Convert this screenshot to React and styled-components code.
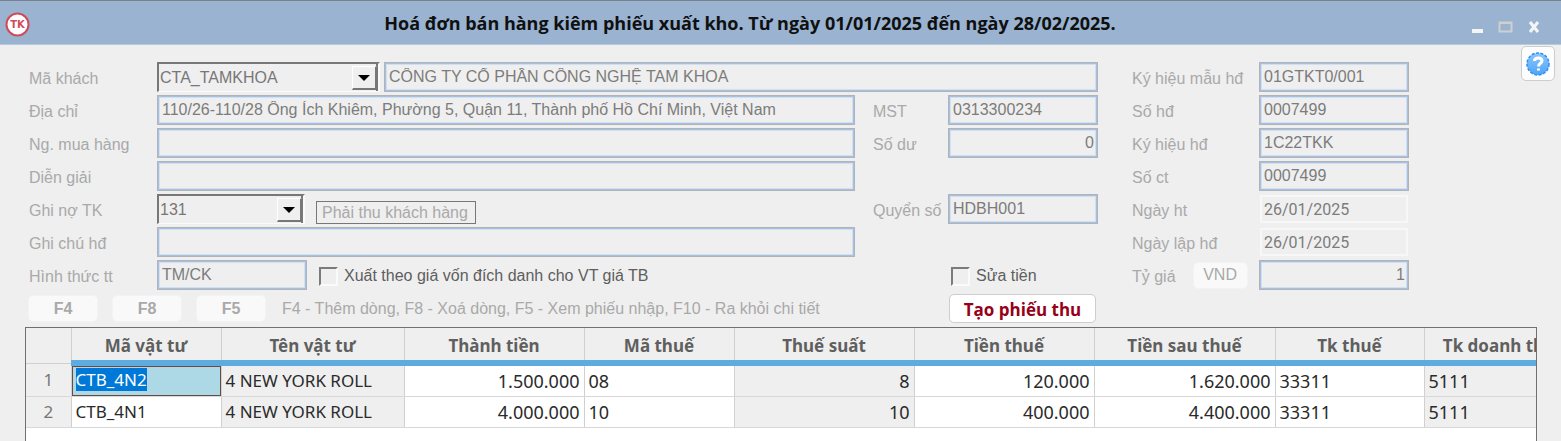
import { useEffect, useRef } from "react"
import styled, { createGlobalStyle } from "styled-components"

const GlobalStyle = createGlobalStyle`
    * {
        box-sizing: border-box;
    }
    body {
        margin: 0;
        background-color: #efefef;
        font-family: "Liberation Sans", sans-serif;
        font-size: 16px;
        line-height: 20px;
    }
    input, select, button {
        font: inherit;
    }
`

const Window = styled.div`
    display: flex;
    flex-direction: column;
    min-height: 100vh;
    overflow: hidden;
`

const TitleBar = styled.header`
    display: grid;
    grid-template-columns: 74px 1fr 120px;
    align-items: center;
    height: 45px;
    padding: 0 20px 0 5px;
    background-color: #99b3d0;
    border-top: 1px solid #7b818a;
    border-bottom: 1px solid #b7c9dd;
`

const Title = styled.h1`
    margin: 0;
    font-family: "Open Sans", sans-serif;
    font-size: 18px;
    font-weight: 700;
    line-height: 24px;
    color: #101010;
    text-align: center;
    white-space: nowrap;
`

const Logo = styled.svg`
    display: block;
    width: 25px;
    height: 25px;
    margin-top: 4px;
`

const WindowButtons = styled.div`
    display: flex;
    justify-content: flex-end;
    gap: 14px;
    margin-top: 8px;
`

const WindowButton = styled.button`
    display: flex;
    padding: 0;
    border: 0;
    background: none;
`

const FormArea = styled.main`
    display: flex;
    align-items: flex-start;
    padding: 1px 6px 0 29px;
`

const LeftPart = styled.div`
    flex: 1;
    min-width: 0;
    padding-top: 16px;
`

const LeftFields = styled.div`
    display: grid;
    grid-template-columns: 128px minmax(0, 1fr) 75px 150px;
    grid-auto-rows: 30px;
    row-gap: 3px;
    align-items: center;
`

const RightFields = styled.div`
    display: grid;
    grid-template-columns: 127px 150px;
    grid-auto-rows: 30px;
    row-gap: 3px;
    align-items: center;
    padding-top: 16px;
    margin: 0 112px 0 34px;
`

const Label = styled.label`
    grid-column: ${(props) => props.$column || "auto"};
    padding-top: 3px;
    color: #a9a9a9;
    white-space: nowrap;
`

const Field = styled.div`
    display: flex;
    align-items: center;
    gap: ${(props) => props.$gap || 4}px;
    grid-column: ${(props) => props.$column || "auto"};
    margin-right: ${(props) => (props.$wide ? 18 : 0)}px;
`

const TextBox = styled.input`
    flex: ${(props) => (props.$width ? "none" : 1)};
    width: ${(props) => (props.$width ? `${props.$width}px` : "100%")};
    min-width: 0;
    height: 30px;
    padding: 0 3px 0 4px;
    border: 1px solid #b0b3ba;
    border-radius: 0;
    box-shadow: inset 0 0 0 1px #a9bfdc, inset 0 0 0 2px #cfe0f2;
    background-color: #efefef;
    color: #7c7c7c;
    text-align: ${(props) => (props.$right ? "right" : "left")};
    outline: none;
`

const DateBox = styled(TextBox)`
    height: 28px;
    margin: 0 1px;
    border: 2px solid #f7f7f7;
    box-shadow: none;
    padding-left: 2px;
    font-family: Roboto, sans-serif;
`

const Combo = styled.div`
    display: grid;
    width: ${(props) => props.$width}px;
    height: 30px;
    border-style: solid;
    border-width: 2px 2px 1px 2px;
    border-color: #777 #fafafa #fafafa #777;
    box-shadow: inset -2px 0 0 #777;
`

const ComboSelect = styled.select`
    grid-area: 1 / 1;
    width: 100%;
    padding: 1px 28px 0 1px;
    border: 0;
    appearance: none;
    background: none;
    color: #777;
    outline: none;
`

const ComboArrow = styled.span`
    grid-area: 1 / 1;
    justify-self: end;
    display: flex;
    align-items: center;
    justify-content: center;
    width: 25px;
    margin: 2px 1px 1px 0;
    border-style: solid;
    border-width: 1px 2px 2px 1px;
    border-color: #fff #777 #777 #fff;
    background-color: #efefef;
    pointer-events: none;
`

const AccountName = styled.span`
    align-self: flex-end;
    height: 23px;
    padding: 0 7px 0 5px;
    border: 1px solid #777;
    color: #a9a9a9;
    line-height: 22px;
`

const CheckLabel = styled.label`
    display: flex;
    align-items: center;
    gap: 6px;
    padding-left: ${(props) => props.$indent || 0}px;
    color: #5e5e5e;
    line-height: 28px;
    padding-top: 2px;
    white-space: nowrap;
`

const CheckBox = styled.input`
    appearance: none;
    width: 19px;
    height: 19px;
    margin: 0;
    border-style: solid;
    border-width: 2px;
    border-color: #7b7b7b #fafafa #fafafa #7b7b7b;
    background-color: #efefef;
`

const Toolbar = styled.div`
    display: flex;
    align-items: center;
    gap: 14px;
    height: 27px;
    margin: 5px 2px 5px -1px;
`

const FlatButton = styled.button`
    width: ${(props) => props.$width}px;
    height: 27px;
    padding: 0;
    border: 1px solid #f3f3f3;
    border-radius: 5px;
    background-color: #f9f9f9;
    color: #a9a9a9;
    font-weight: ${(props) => (props.$bold ? 700 : 400)};
`

const Hint = styled.span`
    flex: 1;
    padding-left: 2px;
    color: #a9a9a9;
    white-space: nowrap;
`

const ReceiptButton = styled.button`
    width: 147px;
    height: 29px;
    padding: 2px 0 0;
    border: 1px solid #cdcdcd;
    border-radius: 5px;
    background-color: #fff;
    color: #960018;
    font-family: "Open Sans", sans-serif;
    font-size: 17px;
    font-weight: 700;
`

const HelpButton = styled.button`
    display: flex;
    align-items: center;
    justify-content: center;
    width: 34px;
    height: 35px;
    padding: 0;
    border: 1px solid #cdcdcd;
    border-radius: 5px;
    background-color: #fdfdfd;
`

const GridFrame = styled.section`
    flex: 1;
    margin: 0 24px 0 25px;
    border: 1px solid #707070;
    border-bottom: 0;
    background-color: #fff;
    overflow: hidden;
    font-family: "Noto Sans", "Open Sans", sans-serif;
    font-size: 17px;
`

const Grid = styled.table`
    width: 1548px;
    table-layout: fixed;
    border-collapse: collapse;
`

const HeadCell = styled.th`
    height: 35px;
    padding: 4px 0 0;
    border-right: 1px solid #d0d0d0;
    border-bottom: ${(props) => (props.$plain ? "1px solid #d0d0d0" : "6px solid #5dabdf")};
    background-color: #efefef;
    color: #5f5f5f;
    font-weight: 700;
    white-space: nowrap;
`

const Cell = styled.td`
    height: 31px;
    padding: 0 4px;
    border-right: 1px solid #d0d0d0;
    border-bottom: 1px solid #d8d8d8;
    background-color: ${(props) => (props.$locked ? "#efefef" : "#fff")};
    color: #2a2a2a;
    font-size: ${(props) => (props.$text ? 17 : 18)}px;
    text-align: ${(props) => props.$align || "left"};
    white-space: nowrap;
`

const RowNumber = styled(Cell)`
    background-color: #efefef;
    color: #777;
    text-align: center;
`

const EditCell = styled(Cell)`
    padding: 0;
`

const CellInput = styled.input`
    display: block;
    width: 100%;
    height: 30px;
    padding: 0 3px 3px;
    border: 1px solid #6b4a40;
    border-radius: 0;
    background-color: #add8e6;
    color: #111;
    outline: none;
    &::selection {
        background-color: #0078d7;
        color: #fff;
    }
`

const columns = [
    { name: "Mã vật tư", width: 150, text: true },
    { name: "Tên vật tư", width: 183, text: true, locked: true },
    { name: "Thành tiền", width: 180, align: "right" },
    { name: "Mã thuế", width: 150 },
    { name: "Thuế suất", width: 180, align: "right", locked: true },
    { name: "Tiền thuế", width: 180, align: "right" },
    { name: "Tiền sau thuế", width: 181, align: "right" },
    { name: "Tk thuế", width: 149 },
    { name: "Tk doanh thu", width: 150, locked: true },
]

const rows = [
    ["CTB_4N2", "4 NEW YORK ROLL", "1.500.000", "08", "8", "120.000", "1.620.000", "33311", "5111"],
    ["CTB_4N1", "4 NEW YORK ROLL", "4.000.000", "10", "10", "400.000", "4.400.000", "33311", "5111"],
]

const ComboBox = ({ id, width, value }) => (
    <Combo $width={width}>
        <ComboSelect id={id} defaultValue={value}>
            <option value={value}>{value}</option>
        </ComboSelect>
        <ComboArrow>
            <svg width="12" height="6" viewBox="0 0 12 6">
                <path d="M0 0h12L6 6z" fill="#000" />
            </svg>
        </ComboArrow>
    </Combo>
)

const Header = () => (
    <TitleBar>
        <Logo viewBox="0 0 25 25">
            <circle cx="12.5" cy="12.5" r="11" fill="#fff" stroke="#d04a5a" strokeWidth="2" />
            <text x="12.5" y="16" textAnchor="middle" fontFamily="DejaVu Sans" fontSize="10" fontWeight="700" fill="#d04a5a">TK</text>
        </Logo>
        <Title>Hoá đơn bán hàng kiêm phiếu xuất kho. Từ ngày 01/01/2025 đến ngày 28/02/2025.</Title>
        <WindowButtons>
            <WindowButton aria-label="Thu nhỏ">
                <svg width="14" height="14"><path d="M2 9h11v4H2z" fill="#f5f5f5" /></svg>
            </WindowButton>
            <WindowButton aria-label="Phóng to">
                <svg width="15" height="14">
                    <path d="M1.500 2.500h12v9h-12z" fill="none" stroke="#cfcfcf" strokeWidth="2" />
                    <path d="M1 2h13v2H1z" fill="#cfcfcf" />
                </svg>
            </WindowButton>
            <WindowButton aria-label="Đóng">
                <svg width="14" height="14"><path d="M3 2l8 10M11 2L3 12" stroke="#f5f5f5" strokeWidth="3" /></svg>
            </WindowButton>
        </WindowButtons>
    </TitleBar>
)

const InvoiceGrid = () => {

    const editRef = useRef(null);

    useEffect(() => {
        editRef.current.focus();
        editRef.current.select();
    }, [])

    return (
        <GridFrame>
            <Grid>
                <colgroup>
                    <col style={{ width: 45 }} />
                    {columns.map((col) => <col key={col.name} style={{ width: col.width }} />)}
                </colgroup>
                <thead>
                    <tr>
                        <HeadCell $plain></HeadCell>
                        {columns.map((col) => <HeadCell key={col.name}>{col.name}</HeadCell>)}
                    </tr>
                </thead>
                <tbody>
                    {rows.map((row, i) => (
                        <tr key={i}>
                            <RowNumber $text>{i + 1}</RowNumber>
                            {row.map((value, j) => (
                                i === 0 && j === 0
                                    ? <EditCell key={j} $text><CellInput ref={editRef} aria-label="Mã vật tư" defaultValue={value} /></EditCell>
                                    : <Cell key={j} $text={columns[j].text} $align={columns[j].align} $locked={columns[j].locked}>{value}</Cell>
                            ))}
                        </tr>
                    ))}
                </tbody>
            </Grid>
        </GridFrame>
    )
}

const App = () => {
    return (
        <Window>
            <GlobalStyle />
            <Header />
            <FormArea>
                <LeftPart>
                    <LeftFields>
                        <Label htmlFor="customer">Mã khách</Label>
                        <Field $column="2 / 5">
                            <ComboBox id="customer" width={223} value="CTA_TAMKHOA" />
                            <TextBox readOnly aria-label="Tên khách" defaultValue="CÔNG TY CỔ PHẦN CÔNG NGHỆ TAM KHOA" />
                        </Field>

                        <Label htmlFor="address">Địa chỉ</Label>
                        <Field $wide>
                            <TextBox id="address" readOnly defaultValue="110/26-110/28 Ông Ích Khiêm, Phường 5, Quận 11, Thành phố Hồ Chí Minh, Việt Nam" />
                        </Field>
                        <Label htmlFor="taxcode">MST</Label>
                        <TextBox id="taxcode" readOnly defaultValue="0313300234" />

                        <Label htmlFor="buyer">Ng. mua hàng</Label>
                        <Field $wide>
                            <TextBox id="buyer" readOnly />
                        </Field>
                        <Label htmlFor="balance">Số dư</Label>
                        <TextBox id="balance" readOnly $right defaultValue="0" />

                        <Label htmlFor="note">Diễn giải</Label>
                        <Field $wide>
                            <TextBox id="note" readOnly />
                        </Field>

                        <Label htmlFor="account" $column="1">Ghi nợ TK</Label>
                        <Field $gap={11}>
                            <ComboBox id="account" width={148} value="131" />
                            <AccountName>Phải thu khách hàng</AccountName>
                        </Field>
                        <Label htmlFor="book">Quyển số</Label>
                        <TextBox id="book" readOnly defaultValue="HDBH001" />

                        <Label htmlFor="remark">Ghi chú hđ</Label>
                        <Field $wide>
                            <TextBox id="remark" readOnly />
                        </Field>

                        <Label htmlFor="payment" $column="1">Hình thức tt</Label>
                        <Field $gap={12}>
                            <TextBox id="payment" readOnly $width={150} defaultValue="TM/CK" />
                            <CheckLabel>
                                <CheckBox type="checkbox" />
                                Xuất theo giá vốn đích danh cho VT giá TB
                            </CheckLabel>
                        </Field>
                        <Field $column="4">
                            <CheckLabel $indent={3}>
                                <CheckBox type="checkbox" />
                                Sửa tiền
                            </CheckLabel>
                        </Field>
                    </LeftFields>
                    <Toolbar>
                        <FlatButton $bold $width={70}>F4</FlatButton>
                        <FlatButton $bold $width={70}>F8</FlatButton>
                        <FlatButton $bold $width={70}>F5</FlatButton>
                        <Hint>F4 - Thêm dòng, F8 - Xoá dòng, F5 - Xem phiếu nhập, F10 - Ra khỏi chi tiết</Hint>
                        <ReceiptButton>Tạo phiếu thu</ReceiptButton>
                    </Toolbar>
                </LeftPart>
                <RightFields>
                    <Label htmlFor="form-no">Ký hiệu mẫu hđ</Label>
                    <TextBox id="form-no" readOnly defaultValue="01GTKT0/001" />
                    <Label htmlFor="invoice-no">Số hđ</Label>
                    <TextBox id="invoice-no" readOnly defaultValue="0007499" />
                    <Label htmlFor="serial">Ký hiệu hđ</Label>
                    <TextBox id="serial" readOnly defaultValue="1C22TKK" />
                    <Label htmlFor="voucher">Số ct</Label>
                    <TextBox id="voucher" readOnly defaultValue="0007499" />
                    <Label htmlFor="date-post">Ngày ht</Label>
                    <Field>
                        <DateBox id="date-post" readOnly defaultValue="26/01/2025" />
                    </Field>
                    <Label htmlFor="date-invoice">Ngày lập hđ</Label>
                    <Field>
                        <DateBox id="date-invoice" readOnly defaultValue="26/01/2025" />
                    </Field>
                    <Field $gap={17}>
                        <Label htmlFor="rate">Tỷ giá</Label>
                        <FlatButton $width={55}>VND</FlatButton>
                    </Field>
                    <TextBox id="rate" readOnly $right defaultValue="1" />
                </RightFields>
                <HelpButton aria-label="Trợ giúp">
                    <svg width="24" height="24" viewBox="0 0 24 24">
                        <defs>
                            <linearGradient id="help-fill" x1="0" y1="0" x2="0" y2="1">
                                <stop offset="0" stopColor="#8cc8fb" />
                                <stop offset="1" stopColor="#4fa4f8" />
                            </linearGradient>
                        </defs>
                        <circle cx="12" cy="12" r="11" fill="url(#help-fill)" stroke="#2f8ff0" strokeWidth="1.500" strokeDasharray="3 1.500" />
                        <path d="M8.500 9C8.500 5 16 5 16 9C16 11.500 12.500 11 12.500 14.500" fill="none" stroke="#fff" strokeWidth="3" />
                        <path d="M11 16.500h3v2h-3z" fill="#fff" />
                    </svg>
                </HelpButton>
            </FormArea>
            <InvoiceGrid />
        </Window>
    )
}

export default App
